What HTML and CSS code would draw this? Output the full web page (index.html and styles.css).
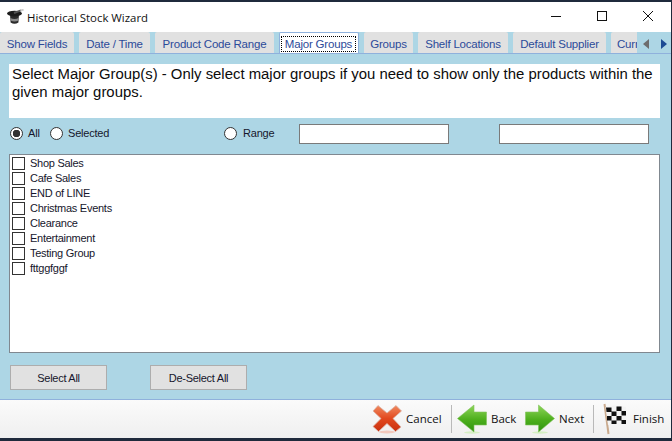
FILE: index.html
```html
<!DOCTYPE html>
<html lang="en">
<head>
<meta charset="utf-8">
<title>Historical Stock Wizard</title>
<link rel="stylesheet" href="styles.css">
</head>
<body>
<div class="window">
  <header class="titlebar">
    <svg class="app-icon" width="18" height="16" viewBox="0 0 18 16">
      <path d="M4 5 L4.600 13.500 Q8.500 16.200 12.400 13.500 L13 5 Z" fill="#2b2b2b"/>
      <path d="M4.300 9 Q8.500 11.200 12.700 9 L12.500 11.600 Q8.500 13.600 4.500 11.600 Z" fill="#8a8a8a"/>
      <ellipse cx="8.500" cy="4.600" rx="7.500" ry="2.800" fill="#1c1c1c"/>
      <path d="M8 4 L15 1.400" stroke="#555" stroke-width="2"/>
      <path d="M14.500 1.600 L17.600 0.600" stroke="#ccc" stroke-width="2"/>
    </svg>
    <span class="title">Historical Stock Wizard</span>
    <div class="winctl">
      <svg width="12" height="12" viewBox="0 0 12 12"><path d="M1 6.500H11" stroke="#111" stroke-width="1"/></svg>
      <svg width="12" height="12" viewBox="0 0 12 12"><rect x="1.500" y="1.500" width="9" height="9" fill="none" stroke="#111"/></svg>
      <svg width="12" height="12" viewBox="0 0 12 12"><path d="M1 1L11 11M11 1L1 11" stroke="#111" stroke-width="1"/></svg>
    </div>
  </header>

  <nav class="tabs">
    <div class="tab w-show">Show Fields</div>
    <div class="tab w-date">Date / Time</div>
    <div class="tab w-code">Product Code Range</div>
    <div class="tab active w-major"><span class="focus">Major Groups</span></div>
    <div class="tab w-groups">Groups</div>
    <div class="tab w-shelf">Shelf Locations</div>
    <div class="tab w-supplier">Default Supplier</div>
    <div class="tab w-curr">Currency</div>
    <div class="scroller">
      <svg width="7" height="10" viewBox="0 0 7 10"><path d="M6 0V10L0 5Z" fill="#6d6d6d"/></svg>
      <svg width="7" height="10" viewBox="0 0 7 10"><path d="M1 0V10L7 5Z" fill="#1b4a94"/></svg>
    </div>
  </nav>

  <main class="panel">
    <p class="desc">Select Major Group(s) - Only select major groups if you need to show only the products within the given major groups.</p>

    <div class="filters">
      <span class="radio checked"></span><span class="rlabel l-all">All</span>
      <span class="radio"></span><span class="rlabel l-sel">Selected</span>
      <span class="radio"></span><span class="rlabel l-range">Range</span>
      <span class="field f-one"></span>
      <span class="field"></span>
    </div>

    <ul class="list">
      <li><span class="check"></span>Shop Sales</li>
      <li><span class="check"></span>Cafe Sales</li>
      <li><span class="check"></span>END of LINE</li>
      <li><span class="check"></span>Christmas Events</li>
      <li><span class="check"></span>Clearance</li>
      <li><span class="check"></span>Entertainment</li>
      <li><span class="check"></span>Testing Group</li>
      <li><span class="check"></span>fttggfggf</li>
    </ul>

    <div class="actions">
      <button class="btn">Select All</button>
      <button class="btn">De-Select All</button>
    </div>
  </main>

  <footer class="toolbar">
    <div class="tool t-cancel">
      <svg width="30" height="30" viewBox="0 0 30 30">
        <defs>
          <linearGradient id="red" x1="0" y1="0" x2="0" y2="1"><stop offset="0" stop-color="#f08a60"/><stop offset=".5" stop-color="#e2491f"/><stop offset="1" stop-color="#c9300f"/></linearGradient>
        </defs>
        <ellipse cx="15" cy="28" rx="8" ry="1.500" fill="#f2c9bd"/>
        <path d="M6 1.500 L15 9 L24 1.500 L29.500 7 L21 14.500 L29 23 L23.500 27.500 L15 19.500 L6.500 27.500 L1 22.500 L9 14.500 L1 7 Z" fill="url(#red)" stroke="#d9b2a6" stroke-width=".8"/>
      </svg>
      <span class="tlabel">Cancel</span>
    </div>
    <i class="sep"></i>
    <div class="tool t-back">
      <svg width="30" height="30" viewBox="0 0 30 30">
        <defs>
          <linearGradient id="gr" x1="0" y1="0" x2="0" y2="1"><stop offset="0" stop-color="#8fd65a"/><stop offset=".55" stop-color="#4cae1c"/><stop offset="1" stop-color="#2f9410"/></linearGradient>
        </defs>
        <ellipse cx="15" cy="28.500" rx="8" ry="1.200" fill="#d5efc4"/>
        <path d="M0.500 14.500 L17 1 V8 H29.500 V21 H17 V28 Z" fill="url(#gr)" stroke="#7fc25a" stroke-width=".6"/>
      </svg>
      <span class="tlabel">Back</span>
    </div>
    <div class="tool t-next">
      <svg width="30" height="30" viewBox="0 0 30 30">
        <ellipse cx="15" cy="28.500" rx="8" ry="1.200" fill="#d5efc4"/>
        <path d="M29.500 14.500 L13.500 1 V8 H0.500 V21 H13.500 V28 Z" fill="url(#gr)" stroke="#7fc25a" stroke-width=".6"/>
      </svg>
      <span class="tlabel">Next</span>
    </div>
    <i class="sep s-two"></i>
    <div class="tool t-finish">
      <svg width="24" height="32" viewBox="0 0 24 32">
        <path d="M1.500 1 L5.500 31" stroke="#c9a98c" stroke-width="2"/>
        <path d="M2.500 4 Q13 1 23 4 L23 21 Q13 18 5 22 Z" fill="#f4f4f4"/>
        <path d="M3 4.500h5.500v4.500h-5zM13.500 3.500h5v4.500h-5zM8.500 8.500h5v4.500h-5zM18.500 8h4.500v4.500h-4.500zM4 13h4.500v4.500H4zM13.500 13h5v4.500h-5zM8.500 17.500h5v3.500h-5zM18.500 17h4.500v4h-4.500z" fill="#111"/>
      </svg>
      <span class="tlabel">Finish</span>
    </div>
  </footer>
</div>
</body>
</html>
```

FILE: styles.css
```css
* { box-sizing: border-box; }
html, body { margin: 0; padding: 0; }
body { width: 672px; height: 441px; overflow: hidden; background: #1f2a3c; font-family: "Liberation Sans", Arial, sans-serif; }
.window { display: flex; flex-direction: column; width: 671px; height: 436px; margin-top: 2px; background: #fff; }

.titlebar { display: flex; align-items: center; height: 30px; flex: none; padding-left: 6px; background: #fff; }
.app-icon { margin-right: 3px; }
.title { font: 11.4px "Open Sans", sans-serif; color: #111; }
.winctl { display: flex; margin-left: auto; margin-bottom: 2px; gap: 34px; padding-right: 17px; }

.tabs { display: flex; flex: none; height: 22px; gap: 5px; overflow: hidden; position: relative; background: #add6e5; border-bottom: 1px solid #8fb1dc; }
.tab { flex: none; height: 21px; line-height: 24px; text-align: center; font-size: 11.5px; letter-spacing: -0.2px; color: #2c4a99; background: #e1e1e1; border-radius: 2px 2px 0 0; white-space: nowrap; }
.w-show { width: 74px; }
.w-date { width: 71px; }
.w-code { width: 119px; }
.w-major { width: 80px; }
.w-groups { width: 49px; }
.w-shelf { width: 90px; }
.w-supplier { width: 93px; }
.w-curr { width: 70px; text-align: left; padding-left: 6px; }
.tab.active { height: 22px; background: #fff; border: 1px solid #8fb1dc; border-bottom: 0; position: relative; z-index: 1; }
.focus { display: block; outline: 1px dotted #000; outline-offset: -1px; height: 16px; width: 75px; margin: 3px 0 0 1px; line-height: 16px; }
.scroller { position: absolute; left: 637px; top: 0; bottom: 0; width: 34px; display: flex; align-items: center; gap: 10px; padding: 3px 0 0 6px; background: #add6e5; }

.panel { flex: 1; display: flex; flex-direction: column; padding: 10px 11px 0 9px; background: #add6e5; border-bottom: 1px solid #8fb1dc; }
.desc { margin: 0; height: 54px; padding: 1px 3px 0; background: #fff; font-size: 14.9px; line-height: 18px; color: #0c0c0c; }

.filters { display: flex; align-items: center; height: 20px; padding-bottom: 3px; margin-top: 6px; font-size: 11px; letter-spacing: -0.2px; color: #16162c; }
.radio { width: 13px; height: 13px; margin: 2px 0 0 1px; flex: none; border: 1px solid #333; border-radius: 50%; background: #fff; }
.radio.checked { background: radial-gradient(circle, #333 0 3.5px, #fff 4px); }
.rlabel { margin-left: 5px; }
.l-all { width: 21px; }
.l-sel { width: 155px; }
.l-range { width: 56px; margin-left: 6px; }
.field { width: 150px; height: 20px; flex: none; align-self: flex-start; background: #fff; border: 1px solid #7a7a7a; }
.f-one { margin-right: 50px; }

.list { list-style: none; margin: 10px 0 0; padding: 0 2px; height: 199px; flex: none; background: #fff; border: 1px solid #808890; font-size: 11px; letter-spacing: -0.27px; color: #16162c; }
.list li { display: flex; align-items: center; height: 15px; white-space: nowrap; }
.check { width: 13px; height: 13px; margin: 2px 5px 0 0; flex: none; border: 1px solid #333; background: #fff; }

.actions { display: flex; gap: 43px; margin-top: 12px; padding-left: 1px; }
.btn { width: 97px; height: 25px; padding: 0; font: 11px "Liberation Sans", Arial, sans-serif; letter-spacing: -0.27px; color: #16162c; background: #e1e1e1; border: 1px solid #adadad; }

.toolbar { display: flex; align-items: center; height: 38px; flex: none; padding-left: 372px; background: linear-gradient(#fbfbfb, #efefef); font: 11.5px "Open Sans", sans-serif; color: #111; }
.tool { display: flex; align-items: center; gap: 4px; flex: none; }
.tlabel { margin-bottom: 2px; }
.sep { width: 1px; height: 28px; flex: none; background: #b9b9b9; }
.t-cancel { width: 79px; }
.t-back { width: 68px; margin-left: 5px; }
.t-next { width: 68px; }
.t-finish { margin-left: 9px; gap: 6px; }
```
